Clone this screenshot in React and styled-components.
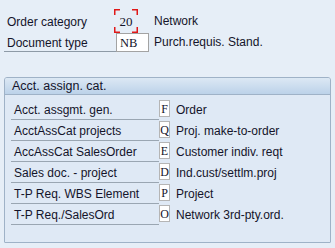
import React from "react";
import styled, { createGlobalStyle } from "styled-components";

const Global = createGlobalStyle`
  html, body { margin: 0; padding: 0; background: #e6eef7; }
  body { font-family: "Liberation Sans", Arial, sans-serif; font-size: 12px; color: #14142a; }
  #root { width: 335px; height: 248px; overflow: hidden; }
`;

const Page = styled.div`
  padding: 9px 4px 0 4px;
  display: flex;
  flex-direction: column;
`;

const TopForm = styled.div`
  display: flex;
  flex-direction: column;
`;

const TopRow = styled.div`
  display: flex;
  align-items: ${(p) => (p.$top ? "center" : "flex-end")};
  height: ${(p) => p.$h}px;
`;

const TopLabel = styled.div`
  width: ${(p) => p.$w}px;
  box-sizing: border-box;
  padding-left: 3px;
  height: ${(p) => p.$h}px;
  line-height: ${(p) => p.$lh}px;
  border-bottom: ${(p) => (p.$line ? "1px solid #8e9aa6" : "none")};
  white-space: nowrap;
`;

const FocusField = styled.div`
  position: relative;
  width: 24px;
  height: 24px;
  box-sizing: border-box;
  padding-top: 1px;
  display: flex;
  align-items: center;
  justify-content: center;
  font-family: "Liberation Serif", "DejaVu Serif", serif;
  font-size: 13px;
`;

const Bracket = styled.svg`
  position: absolute;
  inset: 0;
`;

const TextInput = styled.div`
  box-sizing: border-box;
  width: ${(p) => p.$w}px;
  height: ${(p) => p.$h}px;
  background: #fff;
  border: 1px solid #a3a3a3;
  font-family: "Liberation Serif", "DejaVu Serif", serif;
  font-size: 12.5px;
  line-height: ${(p) => p.$h - 1}px;
  padding-left: 3px;
  color: #14142a;
`;

const Desc = styled.div`
  margin-left: ${(p) => p.$ml}px;
  white-space: nowrap;
  line-height: ${(p) => p.$h}px;
`;

const Group = styled.div`
  margin-top: 25px;
  height: 166px;
  box-sizing: border-box;
  border: 1px solid #9fb2c7;
  border-radius: 3px 3px 1px 1px;
  background: #dfe9f5;
  display: flex;
  flex-direction: column;
`;

const GroupHeader = styled.div`
  height: 16px;
  line-height: 16px;
  padding-left: 7px;
  background: linear-gradient(#dce8f4, #bcd2e9);
  border-bottom: 1px solid #9fb2c7;
  border-radius: 2px 2px 0 0;
  font-size: 12.5px;
`;

const GroupBody = styled.div`
  padding: 4px 0 0 6px;
  display: flex;
  flex-direction: column;
`;

const Row = styled.div`
  display: flex;
  align-items: center;
  height: 21px;
`;

const RowLabel = styled.div`
  width: 148px;
  box-sizing: border-box;
  height: 21px;
  padding: 2px 0 0 3px;
  line-height: 18px;
  border-bottom: 1px solid #9aa6b2;
  white-space: nowrap;
`;

const KeyBox = styled.div`
  box-sizing: border-box;
  width: 11px;
  height: 17px;
  margin-top: -2px;
  background: #fff;
  border: 1px solid #b5b5b5;
  font-family: "Liberation Serif", "DejaVu Serif", serif;
  font-size: 12px;
  line-height: 16px;
  text-align: center;
`;

const RowDesc = styled.div`
  margin-left: 6px;
  padding-top: 1px;
  white-space: nowrap;
`;

const rows = [
  ["Acct. assgmt. gen.", "F", "Order"],
  ["AcctAssCat projects", "Q", "Proj. make-to-order"],
  ["AccAssCat SalesOrder", "E", "Customer indiv. reqt"],
  ["Sales doc. - project", "D", "Ind.cust/settlm.proj"],
  ["T-P Req. WBS Element", "P", "Project"],
  ["T-P Req./SalesOrd", "O", "Network 3rd-pty.ord."],
];

function BracketCorners() {
  const c = "#e01818";
  return (
    <Bracket width="24" height="24" viewBox="0 0 24 24">
      <path d="M0.75 6V0.75H6" fill="none" stroke={c} strokeWidth="1.5" />
      <path d="M18 0.75H23.25V6" fill="none" stroke={c} strokeWidth="1.5" />
      <path d="M0.75 18V23.25H6" fill="none" stroke={c} strokeWidth="1.5" />
      <path d="M18 23.25H23.25V18" fill="none" stroke={c} strokeWidth="1.5" />
    </Bracket>
  );
}

export default function App() {
  return (
    <>
      <Global />
      <Page>
        <TopForm>
          <TopRow $h={24} $top>
            <TopLabel $w={110} $h={24} $lh={26}>Order category</TopLabel>
            <FocusField>
              <BracketCorners />
              20
            </FocusField>
            <Desc $ml={16} $h={26}>Network</Desc>
          </TopRow>
          <TopRow $h={19}>
            <TopLabel $w={112} $h={19} $lh={20} $line>Document type</TopLabel>
            <TextInput $w={33} $h={19}>NB</TextInput>
            <Desc $ml={5} $h={20}>Purch.requis. Stand.</Desc>
          </TopRow>
        </TopForm>
        <Group>
          <GroupHeader>Acct. assign. cat.</GroupHeader>
          <GroupBody>
            {rows.map(([label, key, desc]) => (
              <Row key={key}>
                <RowLabel>{label}</RowLabel>
                <KeyBox>{key}</KeyBox>
                <RowDesc>{desc}</RowDesc>
              </Row>
            ))}
          </GroupBody>
        </Group>
      </Page>
    </>
  );
}
